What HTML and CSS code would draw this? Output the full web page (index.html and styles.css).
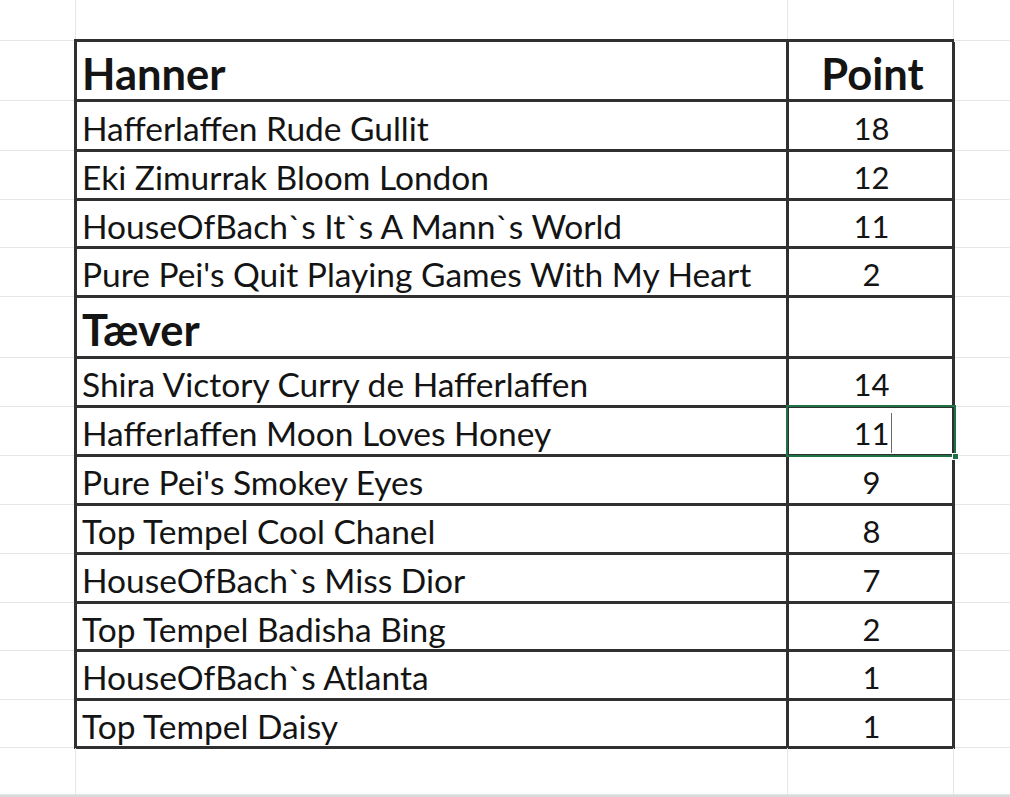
FILE: index.html
```html
<!DOCTYPE html>
<html lang="da">
<head>
<meta charset="utf-8">
<title>Point</title>
<link rel="stylesheet" href="styles.css">
</head>
<body>
<div class="sheet">
  <div class="g a r0"></div><div class="g b r0"></div><div class="g c r0"></div><div class="g d r0"></div>

  <div class="g a"></div><div class="g d"></div>
  <div class="g a"></div><div class="g d"></div>
  <div class="g a"></div><div class="g d"></div>
  <div class="g a"></div><div class="g d"></div>
  <div class="g a"></div><div class="g d"></div>
  <div class="g a"></div><div class="g d"></div>
  <div class="g a"></div><div class="g d"></div>
  <div class="g a"></div><div class="g d"></div>
  <div class="g a"></div><div class="g d"></div>
  <div class="g a"></div><div class="g d"></div>
  <div class="g a"></div><div class="g d"></div>
  <div class="g a"></div><div class="g d"></div>
  <div class="g a"></div><div class="g d"></div>
  <div class="g a"></div><div class="g d"></div>

  <div class="table">
    <div class="cell name head">Hanner</div><div class="cell num head">Point</div>
    <div class="cell name">Hafferlaffen Rude Gullit</div><div class="cell num">18</div>
    <div class="cell name">Eki Zimurrak Bloom London</div><div class="cell num">12</div>
    <div class="cell name">HouseOfBach`s It`s A Mann`s World</div><div class="cell num">11</div>
    <div class="cell name">Pure Pei's Quit Playing Games With My Heart</div><div class="cell num">2</div>
    <div class="cell name head">Tæver</div><div class="cell num head"></div>
    <div class="cell name">Shira Victory Curry de Hafferlaffen</div><div class="cell num">14</div>
    <div class="cell name">Hafferlaffen Moon Loves Honey</div><div class="cell num selected"><span class="val">11<span class="caret"></span></span><span class="sel"><span class="handle"></span></span></div>
    <div class="cell name">Pure Pei's Smokey Eyes</div><div class="cell num">9</div>
    <div class="cell name">Top Tempel Cool Chanel</div><div class="cell num">8</div>
    <div class="cell name">HouseOfBach`s Miss Dior</div><div class="cell num">7</div>
    <div class="cell name">Top Tempel Badisha Bing</div><div class="cell num">2</div>
    <div class="cell name">HouseOfBach`s Atlanta</div><div class="cell num">1</div>
    <div class="cell name">Top Tempel Daisy</div><div class="cell num">1</div>
  </div>

  <div class="g a"></div><div class="g b"></div><div class="g c"></div><div class="g d"></div>
  <div class="bar"></div>
</div>
</body>
</html>
```

FILE: styles.css
```css
* { box-sizing: border-box; }
html, body { margin: 0; padding: 0; background: #ffffff; }
body {
  width: 1010px;
  height: 797px;
  overflow: hidden;
  font-family: Lato, "Open Sans", "Noto Sans", sans-serif;
  color: #141414;
}
.sheet {
  display: grid;
  grid-template-columns: 76px 712px 166px 1fr;
  grid-template-rows: 41px 60px 50px 49px 48px 49px 61px 49px 49px 49px 49px 49px 48px 49px 48px 47px 2px;
  height: 797px;
}
.g {
  border-right: 1px solid #e6e6e6;
  border-bottom: 1px solid #e6e6e6;
}
.a { grid-column: 1; }
.b { grid-column: 2; }
.c { grid-column: 3; }
.d { grid-column: 4; border-right: none; }
.bar {
  grid-column: 1 / -1;
  background: #d9d9d9;
}
.table {
  grid-column: 2 / 4;
  grid-row: 2 / 16;
  display: grid;
  grid-template-columns: 712px 166px;
  grid-template-rows: 60px 50px 49px 48px 49px 61px 49px 49px 49px 49px 49px 48px 49px 48px;
  margin: -2px 0 0 -2px;
  height: calc(100% + 3px);
  border-top: 3px solid #303030;
  border-left: 3px solid #303030;
}
.cell {
  border-right: 3px solid #303030;
  border-bottom: 3px solid #303030;
  display: flex;
  align-items: center;
  padding-top: 4px;
  font-size: 33.5px;
  white-space: nowrap;
}
.name { padding-left: 5px; }
.num { justify-content: center; padding-left: 2px; font-size: 31px; }
.head {
  font-weight: 700;
  font-size: 43.5px;
  padding-top: 4px;
}
.num.head { padding-left: 4px; }
.selected { position: relative; }
.val { position: relative; }
.caret {
  position: absolute;
  right: -3px;
  top: -1px;
  bottom: -1px;
  width: 1.5px;
  background: #6a6a6a;
}
.sel {
  position: absolute;
  left: -3px;
  top: -3px;
  right: -4px;
  bottom: -3px;
  border: 2.5px solid #1f7244;
}
.handle {
  position: absolute;
  right: -5px;
  bottom: -5px;
  width: 7px;
  height: 7px;
  background: #1f7244;
  border: 1px solid #ffffff;
}
```
